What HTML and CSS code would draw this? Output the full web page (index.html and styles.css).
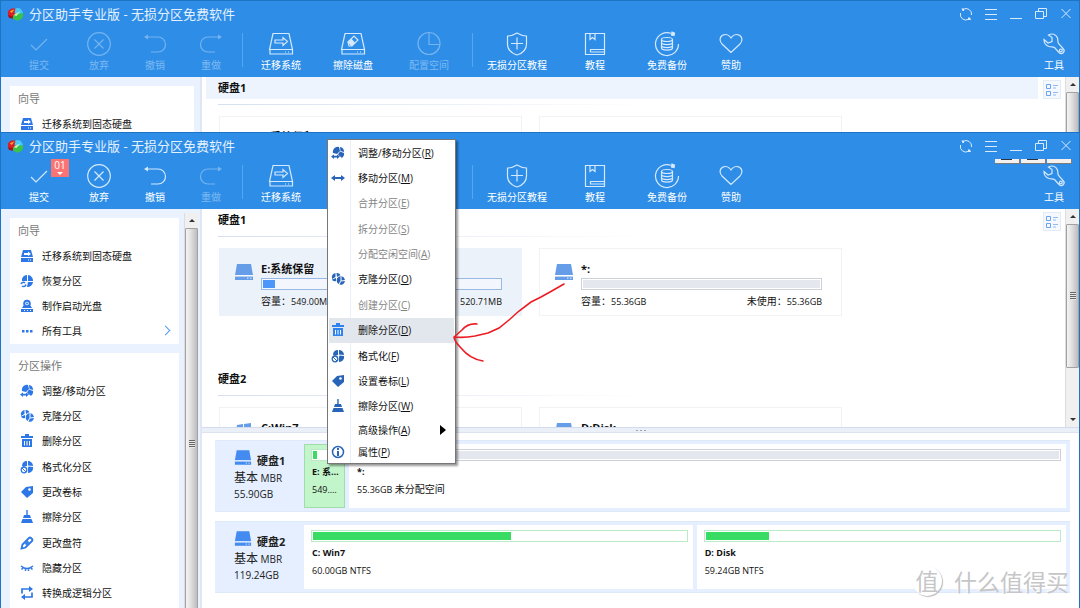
FILE: index.html
```html
<!DOCTYPE html>
<html lang="zh-CN">
<head>
<meta charset="utf-8">
<meta name="viewport" content="width=device-width, initial-scale=1">
<title>分区助手专业版 - 无损分区免费软件</title>
<link rel="stylesheet" href="styles.css">
</head>
<body>
<svg class="sprite" aria-hidden="true">
  <symbol id="logo" viewBox="0 0 18 16">
    <path d="M1 5q4-5 9-2l-1 5-2 3-4 1-2-3z" fill="#d81f26"/><path d="M3 5l5-2-3 4z" fill="#f4a430"/><path d="M1 9l6 2-1 2-4-1z" fill="#a80f18"/>
    <path d="M9 2q6-2 8 5l-6 2-3-2z" fill="#45c8f5"/><path d="M7 9l10-2q1 6-5 8-4 0-6-3z" fill="#39c34a"/><path d="M7 9l7-4-4 5z" fill="#d4f5a4"/>
  </symbol>
  <symbol id="check" viewBox="0 0 26 26"><path d="M5 14l5 5L21 8"/></symbol>
  <symbol id="cancel" viewBox="0 0 26 26"><circle cx="13" cy="13" r="11.3"/><path d="M8.500 8.500l9 9m0-9l-9 9"/></symbol>
  <symbol id="undo" viewBox="0 0 26 26"><path d="M5 6h11a7.500 7.500 0 0 1 0 15H9"/><path d="M2 6l4-2.500v5z" fill="currentColor" stroke="none"/></symbol>
  <symbol id="redo" viewBox="0 0 26 26"><path d="M21 6H10a7.500 7.500 0 0 0 0 15h7"/><path d="M24 6l-4-2.500v5z" fill="currentColor" stroke="none"/></symbol>
  <symbol id="migrate" viewBox="0 0 26 26"><path d="M5 2.500h16l3.500 16h-23zM2 18.500v4.500h22.500v-4.500"/><path d="M7 9h8V6.500l4.500 4L15 14.500V12H7z"/><path d="M17 21h1m2 0h1"/></symbol>
  <symbol id="wipe" viewBox="0 0 26 26"><path d="M5 2.500h16l3.500 16h-23zM2 18.500v4.500h22.500v-4.500"/><path d="M8 11l6-6 4 4-6 6H9z"/><path d="M8.500 11l3-2.500 3 3.500-3 2.500z" fill="currentColor"/><path d="M17 21h1m2 0h1"/></symbol>
  <symbol id="pie" viewBox="0 0 26 26"><circle cx="13" cy="12.500" r="11"/><path d="M13 1.500v12h10.500"/></symbol>
  <symbol id="shield" viewBox="0 0 26 26"><path d="M13 2q5 3 9.500 3v8q0 8-9.500 11Q3.500 21 3.500 13V5q4.500 0 9.500-3zM13 6.500v12M7 12.500h12"/></symbol>
  <symbol id="book" viewBox="0 0 26 26"><path d="M3.500 2.500h19v21h-19zM8 2.500v6l2.500-2 2.500 2v-6M22 18.500H8.500V21H22"/></symbol>
  <symbol id="backup" viewBox="0 0 26 26"><path d="M17 2.300A11.500 11.500 0 1 0 24.500 13"/><path d="M18 1l2.500 1-.5 2.500-2.500-.5z" fill="currentColor"/><ellipse cx="13" cy="8.500" rx="5.500" ry="2"/><path d="M7.500 8.500v8.500c0 2.700 11 2.700 11 0V8.500M7.500 11.500c0 2.700 11 2.700 11 0M7.500 14.500c0 2.700 11 2.700 11 0"/></symbol>
  <symbol id="heart" viewBox="0 0 26 26"><path d="M13 21.500L4 13C0 8 3 3.500 7.500 3.500c3 0 5.500 3 5.500 4 0-1 2.500-4 5.500-4C23 3.500 26 8 22 13z"/></symbol>
  <symbol id="wrench" viewBox="0 0 26 26"><path d="M3 8.500l4 3.500 4-1.500V6.500L7.500 4C11 2 15 3 16.500 7c.6 2 0 4 1 5.500l4.500 5c3 3-1 7-4 4l-4.500-5c-1.500-1-3.500-.3-5.500-1C4.500 14.500 3 12 3 8.500z"/><circle cx="19.800" cy="19.500" r="1.400"/></symbol>
  <symbol id="refresh" viewBox="0 0 14 14"><path d="M4 2.500A5.500 5.500 0 0 1 12.500 8M9.500 12.300A5.500 5.500 0 0 1 1.500 6"/><path d="M2.500 1.500h2.500v2.500H3.500zM9 10.500h2l1 2.500H9z" fill="currentColor" stroke="none"/></symbol>
  <symbol id="lines" viewBox="0 0 14 14"><path d="M1 2.500h12M1 7.500h12M1 12.500h12"/></symbol>
  <symbol id="min" viewBox="0 0 14 14"><path d="M1 11.500h12"/></symbol>
  <symbol id="restore" viewBox="0 0 14 14"><path d="M1.500 4.500h8v7h-8zM4.500 4V1.500h8v8H10"/></symbol>
  <symbol id="close" viewBox="0 0 14 14"><path d="M2.500 2l9 9m0-9l-9 9"/></symbol>
  <symbol id="s-migrate" viewBox="0 0 14 14"><path fill="currentColor" d="M3 1h8l2 7H1zM1 9h12v4H1z"/><path fill="#fff" d="M4 4h4V2.500L11 5 8 7V6H4zM8 10.500h1v1H8zm2 0h1v1h-1z"/></symbol>
  <symbol id="s-recover" viewBox="0 0 14 14"><path fill="currentColor" d="M7 1v6H2a5 5 0 0 1 5-6zM8 1a5.500 5.500 0 0 1 5 6H8zM8 8h5a5.500 5.500 0 0 1-6 5z"/><path d="M1 10a2.500 2.500 0 0 1 4-1M6 10.500a2.500 2.500 0 0 1-4 1.500" fill="none" stroke="currentColor" stroke-width="1.500"/></symbol>
  <symbol id="s-disc" viewBox="0 0 14 14"><path fill="currentColor" d="M1 10h12v3H1zM2 9l1.500-2.500h7L12 9z"/><circle cx="7" cy="4.500" r="2.800" fill="#fff" stroke="currentColor" stroke-width="2"/><circle cx="7" cy="4.500" r="1" fill="currentColor"/><path fill="#fff" d="M4 11h1v1H4zm3 0h1v1H7zm3 0h1v1h-1z"/></symbol>
  <symbol id="s-more" viewBox="0 0 14 14"><path fill="currentColor" d="M2 6h2.500v2.500H2zm4 0h2.500v2.500H6zm4 0h2.500v2.500H10z"/></symbol>
  <symbol id="s-resize" viewBox="0 0 14 14"><path fill="currentColor" d="M2 7a5 5 0 0 1 6-6l1 4-3 3zM9 1A5 5 0 0 1 13 6l-3.500-1zM13 7a5 5 0 0 1-2 5L7 8.500l2-3z"/><path fill="currentColor" d="M0 10.500l3-2v1.300h3V8.500l3 2-3 2.500v-1.500H3V13z"/></symbol>
  <symbol id="s-clone" viewBox="0 0 14 14"><path fill="currentColor" d="M4.500 1v4L1 7Q0 2 4.500 1zM5.500 1Q8 .5 9.500 3L6 5zM1 7.500L5 6v3Q2 10 1 7.500zM6 6.500Q7 4.500 9.500 4v5l-2 3Q5 10 6 6.500zM10.500 4Q13.500 5 14 8l-3.500.5zM10 9.500l4-.5q-1 4.500-5.500 3.500z"/></symbol>
  <symbol id="s-trash" viewBox="0 0 14 14"><path fill="currentColor" d="M5 0h4v2h4v2H1V2h4zM2 5h10v8H2z"/><path stroke="#fff" d="M4.500 7v4.500m2.500-4.500v4.500M9.500 7v4.500"/></symbol>
  <symbol id="s-format" viewBox="0 0 14 14"><path fill="currentColor" d="M2 5.500A5 5 0 0 1 7 1v5L3 7zM8 1a5 5 0 0 1 5 5L8 5.500zM13 7a5 5 0 0 1-5 6V8l.5-1.500z"/><circle cx="4" cy="10" r="2.800" fill="#fff" stroke="currentColor" stroke-width="1.300"/><path d="M2 8l4 4" stroke="currentColor"/></symbol>
  <symbol id="s-tag" viewBox="0 0 14 14"><path fill="currentColor" d="M6 2l7-1 0 7-6 5-6-6z"/><circle cx="9.500" cy="4.500" r="1.300" fill="#fff"/></symbol>
  <symbol id="s-broom" viewBox="0 0 14 14"><path fill="currentColor" d="M6.300 0h1.400v5h2.300l1 3H3l1-3h2.300zM2.500 9h9l1.500 4H1z"/></symbol>
  <symbol id="s-pencil" viewBox="0 0 14 14"><path fill="none" stroke="currentColor" stroke-width="1.800" d="M1.500 12.500l1-4 6.500-6.500q1-1 2 0l1 1q1 1 0 2L5.500 11.500zM5.500 8.500l3-3"/></symbol>
  <symbol id="s-eye" viewBox="0 0 14 14"><path fill="none" stroke="currentColor" stroke-width="1.500" d="M1 5q6 5 12 0M3 7L1.500 8.500M5.500 8v2M8.500 8v2M11 7l1.500 1.500"/></symbol>
  <symbol id="s-convert" viewBox="0 0 14 14"><path fill="none" stroke="currentColor" stroke-width="1.700" d="M2 7.500V3h8M12 6.500v4.500H4"/><path fill="currentColor" d="M9 0l4 3-4 3zM5 8l-4 3 4 3z"/></symbol>
  <symbol id="s-move" viewBox="0 0 14 14"><path fill="currentColor" d="M0 7l4-3v2h6V4l4 3-4 3V8H4v2z"/></symbol>
  <symbol id="s-info" viewBox="0 0 14 14"><circle cx="7" cy="7" r="5.500" fill="none" stroke="currentColor" stroke-width="1.500"/><path fill="currentColor" d="M6 3h2v2H6zM6 6h2v5H6z"/></symbol>
  <symbol id="disk" viewBox="0 0 20 16"><path fill="currentColor" d="M3 0h14l2 11H1zM1 12.500h18V16H1z"/><path fill="#fff" opacity=".6" d="M13 13.500h1.500V15H13zm3 0h1.500V15H16zM1 11.200h18v1H1z"/></symbol>
  <symbol id="windisk" viewBox="0 0 20 16"><path fill="currentColor" d="M3 2l6-1v7H2zM10 1l7-1v8h-7zM1 9h18v7H1z"/></symbol>
  <symbol id="view" viewBox="0 0 14 14"><path fill="none" stroke="#6ba3f3" d="M1.500 1.500h4v4h-4zM1.500 8.500h4v4h-4z"/><path stroke="#8fbaf6" d="M8 2.500h5M8 5h3M8 9.500h5M8 12h3"/></symbol>
</svg>

<section class="window window-back">
  <header class="header">
    <div class="titlebar">
      <svg class="logo"><use href="#logo"/></svg><h1>分区助手专业版 - 无损分区免费软件</h1>
      <div class="controls">
        <button aria-label="刷新"><svg><use href="#refresh"/></svg></button><button aria-label="菜单"><svg><use href="#lines"/></svg></button><button aria-label="最小化"><svg><use href="#min"/></svg></button><button aria-label="还原"><svg><use href="#restore"/></svg></button><button aria-label="关闭"><svg><use href="#close"/></svg></button>
      </div>
    </div>
    <nav class="toolbar">
      <button class="tool t64" disabled><svg><use href="#check"/></svg>提交</button>
      <button class="tool t56" disabled><svg><use href="#cancel"/></svg>放弃</button>
      <button class="tool t56" disabled><svg><use href="#undo"/></svg>撤销</button>
      <button class="tool t56" disabled><svg><use href="#redo"/></svg>重做</button>
      <span class="sep"></span>
      <button class="tool t72"><svg><use href="#migrate"/></svg>迁移系统</button>
      <button class="tool t72"><svg><use href="#wipe"/></svg>擦除磁盘</button>
      <button class="tool t80" disabled><svg><use href="#pie"/></svg>配置空间</button>
      <span class="sep"></span>
      <button class="tool t84"><svg><use href="#shield"/></svg>无损分区教程</button>
      <button class="tool t72"><svg><use href="#book"/></svg>教程</button>
      <button class="tool t72"><svg><use href="#backup"/></svg>免费备份</button>
      <button class="tool t56"><svg><use href="#heart"/></svg>赞助</button>
      <button class="tool last"><svg><use href="#wrench"/></svg>工具</button>
    </nav>
  </header>
  <div class="content">
    <aside class="sidebar">
      <div class="cards">
        <div class="panel"><h2>向导</h2>
          <button class="nav"><svg><use href="#s-migrate"/></svg>迁移系统到固态硬盘</button>
        </div>
      </div>
    </aside>
    <main class="main">
      <div class="upper">
        <div class="disks">
          <section class="disk"><h3 class="active">硬盘1</h3>
            <div class="volumes">
              <div class="volume"><svg><use href="#disk"/></svg><div><h4>E:系统保留</h4></div></div>
              <div class="volume"><svg><use href="#disk"/></svg><div><h4>*:</h4></div></div>
            </div>
          </section>
        </div>
        <button class="view" aria-label="切换视图"><svg><use href="#view"/></svg></button>
        <div class="scroll"><i class="up"></i><i class="thumb rest"></i></div>
      </div>
    </main>
  </div>
</section>

<section class="window window-front">
  <header class="header">
    <div class="titlebar">
      <svg class="logo"><use href="#logo"/></svg><h1>分区助手专业版 - 无损分区免费软件</h1>
      <div class="controls">
        <button aria-label="刷新"><svg><use href="#refresh"/></svg></button><button aria-label="菜单"><svg><use href="#lines"/></svg></button><button aria-label="最小化"><svg><use href="#min"/></svg></button><button aria-label="还原"><svg><use href="#restore"/></svg></button><button aria-label="关闭"><svg><use href="#close"/></svg></button>
      </div>
    </div>
    <div class="tabs"><i class="dark"></i><i class="dark"></i><i></i></div>
    <nav class="toolbar">
      <button class="tool t64"><svg><use href="#check"/></svg>提交<span class="badge">01</span></button>
      <button class="tool t56"><svg><use href="#cancel"/></svg>放弃</button>
      <button class="tool t56"><svg><use href="#undo"/></svg>撤销</button>
      <button class="tool t56" disabled><svg><use href="#redo"/></svg>重做</button>
      <span class="sep"></span>
      <button class="tool t72"><svg><use href="#migrate"/></svg>迁移系统</button>
      <button class="tool t72"><svg><use href="#wipe"/></svg></button>
      <button class="tool t80" disabled><svg><use href="#pie"/></svg></button>
      <span class="sep"></span>
      <button class="tool t84"><svg><use href="#shield"/></svg>无损分区教程</button>
      <button class="tool t72"><svg><use href="#book"/></svg>教程</button>
      <button class="tool t72"><svg><use href="#backup"/></svg>免费备份</button>
      <button class="tool t56"><svg><use href="#heart"/></svg>赞助</button>
      <button class="tool last"><svg><use href="#wrench"/></svg>工具</button>
    </nav>
  </header>
  <div class="content">
    <aside class="sidebar">
      <div class="cards">
        <div class="panel"><h2>向导</h2>
          <button class="nav"><svg><use href="#s-migrate"/></svg>迁移系统到固态硬盘</button>
          <button class="nav"><svg><use href="#s-recover"/></svg>恢复分区</button>
          <button class="nav"><svg><use href="#s-disc"/></svg>制作启动光盘</button>
          <button class="nav more"><svg><use href="#s-more"/></svg>所有工具</button>
        </div>
        <div class="panel grow"><h2>分区操作</h2>
          <div class="ops">
            <button class="nav"><svg><use href="#s-resize"/></svg>调整/移动分区</button>
            <button class="nav"><svg><use href="#s-clone"/></svg>克隆分区</button>
            <button class="nav"><svg><use href="#s-trash"/></svg>删除分区</button>
            <button class="nav"><svg><use href="#s-format"/></svg>格式化分区</button>
            <button class="nav"><svg><use href="#s-tag"/></svg>更改卷标</button>
            <button class="nav"><svg><use href="#s-broom"/></svg>擦除分区</button>
            <button class="nav"><svg><use href="#s-pencil"/></svg>更改盘符</button>
            <button class="nav"><svg><use href="#s-eye"/></svg>隐藏分区</button>
            <button class="nav"><svg><use href="#s-convert"/></svg>转换成逻辑分区</button>
          </div>
        </div>
      </div>
      <div class="scroll side"><i class="up"></i><i class="thumb rest grip"></i></div>
    </aside>
    <main class="main">
      <div class="upper">
        <div class="disks">
          <section class="disk"><h3>硬盘1</h3>
            <div class="volumes">
              <div class="volume selected"><svg><use href="#disk"/></svg><div><h4>E:系统保留</h4><div class="meter"><i style="width:5%"></i></div><p><span>容量：<b>549.00MB</b></span><span>未使用：<b>520.71MB</b></span></p></div></div>
              <div class="volume"><svg><use href="#disk"/></svg><div><h4>*:</h4><div class="meter free"></div><p><span>容量：<b>55.36GB</b></span><span>未使用：<b>55.36GB</b></span></p></div></div>
            </div>
          </section>
          <section class="disk"><h3>硬盘2</h3>
            <div class="volumes">
              <div class="volume"><svg><use href="#windisk"/></svg><div><h4>C:Win7</h4></div></div>
              <div class="volume"><svg><use href="#disk"/></svg><div><h4>D:Disk</h4></div></div>
            </div>
          </section>
        </div>
        <button class="view" aria-label="切换视图"><svg><use href="#view"/></svg></button>
        <div class="scroll"><i class="up"></i><i class="thumb grip"></i><i class="down"></i></div>
      </div>
      <div class="splitter"><i></i><i></i><i></i></div>
      <div class="maps">
        <div class="map">
          <div class="info"><div><svg><use href="#disk"/></svg><strong>硬盘1</strong></div><p><big>基本</big> MBR</p><p>55.90GB</p></div>
          <div class="part chosen"><div class="bar"><i style="width:14%"></i></div><h4>E: 系统保留</h4><p>549.00MB</p></div>
          <div class="part fill"><div class="bar empty"></div><h4>*:</h4><p>55.36GB <span>未分配空间</span></p></div>
        </div>
        <div class="map">
          <div class="info"><div><svg><use href="#disk"/></svg><strong>硬盘2</strong></div><p><big>基本</big> MBR</p><p>119.24GB</p></div>
          <div class="part c"><div class="bar"><i style="width:53%"></i></div><h4>C: Win7</h4><p>60.00GB NTFS</p></div>
          <div class="part d"><div class="bar"><i style="width:18%"></i></div><h4>D: Disk</h4><p>59.24GB NTFS</p></div>
        </div>
      </div>
    </main>
  </div>
  <div class="menu" role="menu">
    <div class="entries">
      <button role="menuitem"><svg><use href="#s-resize"/></svg><span>调整/移动分区(<u>R</u>)</span></button>
      <button role="menuitem"><svg><use href="#s-move"/></svg><span>移动分区(<u>M</u>)</span></button>
      <button role="menuitem" disabled><span>合并分区(<u>E</u>)</span></button>
      <button role="menuitem" disabled><span>拆分分区(<u>S</u>)</span></button>
      <button role="menuitem" disabled><span>分配空闲空间(<u>A</u>)</span></button>
      <button role="menuitem"><svg><use href="#s-clone"/></svg><span>克隆分区(<u>O</u>)</span></button>
      <button role="menuitem" disabled><span>创建分区(<u>C</u>)</span></button>
      <button role="menuitem" class="hover"><svg><use href="#s-trash"/></svg><span>删除分区(<u>D</u>)</span></button>
      <button role="menuitem"><svg><use href="#s-format"/></svg><span>格式化(<u>F</u>)</span></button>
      <button role="menuitem"><svg><use href="#s-tag"/></svg><span>设置卷标(<u>L</u>)</span></button>
      <button role="menuitem"><svg><use href="#s-broom"/></svg><span>擦除分区(<u>W</u>)</span></button>
    </div>
    <button role="menuitem" class="short sub"><span>高级操作(<u>A</u>)</span></button>
    <button role="menuitem" class="short"><svg><use href="#s-info"/></svg><span>属性(<u>P</u>)</span></button>
  </div>
  <svg class="arrow" viewBox="450 280 120 86" aria-hidden="true"><path d="M564 284L550 292 541 297 531 302 519 311 509 320 499 328 488 333 475 336Q464 338 455 337M477 324Q468 323 462 330L454 337Q454 341 461 348 470 359 483 361"/></svg>
</section>
<div class="watermark"><span>值</span>什么值得买</div>
</body>
</html>
```
FILE: styles.css
```css
* { box-sizing: border-box; margin: 0; padding: 0; }
body {
  height: 100vh;
  display: flex;
  flex-direction: column;
  overflow: hidden;
  position: relative;
  font: 10px/16px "Open Sans", "Noto Sans CJK SC", sans-serif;
  color: #111;
  background: #fff;
}
button { border: 0; background: none; font: inherit; color: inherit; text-align: left; }
svg { display: block; flex: none; }
h1, h2, h3, h4 { font-weight: 400; }
b { font-weight: 400; font-size: 9px; }
.sprite { position: absolute; width: 0; height: 0; }

.window {
  display: flex;
  flex-direction: column;
  overflow: hidden;
  border: 1px solid #1d74c4;
  border-bottom: 0;
  background: #fff;
}
.window-back { flex: 0 0 132px; }
.window-front { flex: 1; min-height: 0; position: relative; }

.header { flex: 0 0 76px; background: #2d8de7; color: #fff; position: relative; }
.titlebar { height: 25px; display: flex; align-items: center; padding-left: 6px; }
.logo { width: 17px; height: 16px; }
.titlebar h1 { margin-left: 5px; font-size: 13px; line-height: 20px; white-space: nowrap; color: #e4f1ff; }
.controls { margin-left: auto; padding-right: 1px; display: flex; }
.controls button { width: 25px; height: 25px; display: grid; place-items: center; color: #d9ebff; }
.controls svg { width: 14px; height: 14px; fill: none; stroke: currentColor; }
.tabs { position: absolute; right: 7px; top: 26px; display: flex; gap: 1px; }
.tabs i { width: 25px; height: 5px; background: #f3f0ee; border-bottom: 1px solid #7b7b7b; border-right: 1px solid #7b7b7b; }
.tabs .dark { background: linear-gradient(#2b3446, #2b3446) 6px 0 / 11px 1px no-repeat #f3f0ee; }

.toolbar { display: flex; padding: 5px 0 0 6px; }
.tool {
  height: 44px;
  display: flex;
  flex-direction: column;
  align-items: center;
  position: relative;
  white-space: nowrap;
}
.tool svg { width: 26px; height: 26px; fill: none; stroke: currentColor; stroke-width: 1.2; color: #d5e9ff; }
.tool:disabled { color: #7db9f2; }
.tool:disabled svg { color: #75b4f1; }
.t56 { width: 56px; }
.t64 { width: 64px; }
.t72 { width: 72px; }
.t80 { width: 80px; }
.t84 { width: 84px; }
.last { width: 50px; margin-left: auto; }
.sep { width: 1px; height: 34px; margin: 2px 2px 0 3px; background: #57a5ed; }
.badge {
  position: absolute;
  left: 44px;
  top: -4px;
  width: 18px;
  height: 18px;
  background: #fa7474;
  font: 10px/13px "Open Sans", sans-serif;
  text-align: center;
}
.badge::after { content: ""; display: block; width: 0; margin: 0 auto; border: 3px solid transparent; border-top-color: #fff; border-bottom: 0; }

.content { flex: 1; min-height: 0; display: flex; }
.sidebar {
  flex: 0 0 201px;
  display: flex;
  gap: 5px;
  padding: 9px 6px 0 9px;
  overflow: hidden;
  background: #eaf2ff;
  border-right: 2px solid #e0e6f2;
}
.window-front .sidebar { padding-right: 2px; }
.cards { flex: 1; display: flex; flex-direction: column; gap: 9px; }
.panel { background: #fff; padding-bottom: 1px; }
.grow { flex: 1 0 auto; }
.panel h2 { height: 25px; padding-left: 8px; font-size: 11px; line-height: 26px; color: #777; }
.nav { width: 100%; height: 25px; display: flex; align-items: center; gap: 8px; padding-left: 10px; }
.nav svg { width: 14px; height: 14px; color: #2d78e6; }
.more::after { content: ""; width: 6px; height: 6px; margin: 0 10px 0 auto; border: solid #4c9cf3; border-width: 1px 1px 0 0; rotate: 45deg; }
.ops { display: grid; grid-auto-rows: 1fr; height: 228px; }
.ops .nav { height: auto; }

.scroll { flex: 0 0 14px; display: flex; flex-direction: column; background: #f0f0f0; border-left: 1px solid #ddd; }
.up, .down { flex: 0 0 15px; display: grid; place-items: center; }
.up::before, .down::before { content: ""; border: 3px solid transparent; border-top-width: 0; border-bottom-color: #333; }
.down { margin-top: auto; }
.down::before { rotate: 180deg; }
.thumb { height: 144px; display: grid; place-items: center; border: 1px solid #a2a2a2; border-radius: 1px; background: linear-gradient(90deg, #f4f4f4, #e2e2e2 40%, #bdbdc1); }
.rest { height: auto; flex: 1; }
.grip::before { content: ""; width: 6px; height: 8px; background: repeating-linear-gradient(#666 0 1px, #e8e8e8 1px 2px); }
.side { margin: -5px 0 -52px; }

.main { flex: 1; min-width: 0; display: flex; flex-direction: column; }
.upper { flex: 0 0 218px; display: flex; overflow: hidden; }
.disks { flex: 1; padding-left: 4px; }
.disk { height: 159px; }
.disk h3 { height: 22px; padding-left: 12px; font-size: 11px; line-height: 22px; font-weight: 700; }
.disk .active { background: #edf4fe; }
.disk h3::after { content: ""; display: block; height: 1px; width: 432px; margin-top: 5px; background: linear-gradient(90deg, #d6e0ee, #fff); }
.volumes { display: flex; gap: 17px; padding: 17px 0 0 13px; }
.volume { flex: 0 1 303px; min-width: 0; height: 68px; display: flex; gap: 7px; padding: 13px 19px 0 14px; border: 1px solid #f1f2f4; }
.volume > svg { width: 20px; height: 16px; margin-top: 2px; color: #659de9; }
.volume > div { flex: 1; }
.volume h4 { font-size: 11px; line-height: 14px; font-weight: 700; }
.selected { background: #ecf2fa; border-color: #ecf2fa; }
.meter { height: 12px; margin-top: 2px; padding: 1px; border: 1px solid #98b8e6; background: #f3f7fd; }
.meter i { display: block; height: 100%; background: #4b95fb; }
.free { border-color: #ccd0d8; background: #e4e7ed content-box; }
.volume p { display: flex; justify-content: space-between; margin-top: 3px; white-space: nowrap; font-family: "Open Sans", "Noto Sans CJK TC", sans-serif; }
.view { flex: 0 0 18px; height: 19px; margin: 3px 4px 0 5px; border: 1px solid #e3ebf7; background: #f5f9fe; display: grid; place-items: center; }
.view svg { width: 14px; height: 14px; }

.splitter { flex: 0 0 6px; display: flex; gap: 2px; align-items: center; justify-content: center; background: #ebf0f8; border-top: 1px solid #d3dcea; border-bottom: 1px solid #dce3ee; }
.splitter i { width: 2px; height: 1px; background: #9ba5b5; }
.maps { flex: 1; min-height: 0; padding: 7px 9px 0 13px; display: flex; flex-direction: column; gap: 9px; }
.map { flex: 0 0 72px; display: flex; gap: 4px; padding: 3px 4px; background: #e5efff; border: solid #dde8f8; border-width: 1px 0; }
.info { flex: 0 0 81px; padding: 5px 0 0 15px; color: #222; }
.info div { display: flex; gap: 5px; height: 21px; }
.info svg { width: 18px; height: 15px; margin-top: 1px; color: #438bf0; }
.info strong { font-size: 11px; line-height: 24px; }
.info big { font-size: 12px; }
.part { min-width: 0; padding: 5px 5px 0 7px; background: #fff; }
.part h4 { padding-left: 1px; margin-top: 3px; font-size: 9px; line-height: 16px; font-weight: 700; overflow: hidden; text-overflow: ellipsis; white-space: nowrap; }
.part p { padding-left: 1px; font-size: 9px; line-height: 19px; overflow: hidden; text-overflow: ellipsis; white-space: nowrap; }
.part p span { font-size: 10px; }
.chosen { flex: 0 0 41px; padding: 4px 1px 0 6px; background: #c3f5ca; border: 1px solid #a2dcaa; }
.chosen p { padding-right: 2px; }
.fill { flex: 1; }
.c { flex: 389; }
.d { flex: 369; }
.bar { height: 12px; padding: 1px; border: 1px solid #bdeac6; background: #fff; }
.bar i { display: block; height: 100%; background: #39dc62; }
.empty { border-color: #ccd0d8; background: #e4e7ed content-box; }

.menu {
  position: absolute;
  left: 326px;
  top: 6px;
  width: 129px;
  padding: 0 1px;
  background: linear-gradient(90deg, #fff 22px, #e8eff8 22px 23px, #fff 23px);
  border: 1px solid #777;
  box-shadow: 2px 2px 2px #0006;
}
.entries { display: grid; grid-auto-rows: 1fr; height: 279px; }
.menu button { width: 100%; display: flex; align-items: center; position: relative; padding-left: 29px; white-space: nowrap; }
.menu svg { position: absolute; left: 2px; width: 14px; height: 14px; color: #2865b9; }
.menu button:disabled { color: #858585; }
.menu .hover { background: #e2e7ee; }
.menu .hover svg { color: #2f83ee; }
.menu .short { height: 22px; }
.menu .sub::after { content: ""; position: absolute; right: 8px; border: 5px solid transparent; border-left: 6px solid #000; border-right: 0; }
.arrow { position: absolute; left: 449px; top: 147px; width: 120px; height: 86px; fill: none; stroke: #ed1c24; stroke-width: 1.6; stroke-linecap: round; }

.watermark {
  position: absolute;
  right: 11px;
  bottom: 12px;
  display: flex;
  align-items: center;
  gap: 12px;
  font: 23px/30px "Noto Sans CJK SC", sans-serif;
  color: #c6c6c8;
  text-shadow: -1px -1px 0 #fff;
}
.watermark span { width: 30px; height: 30px; line-height: 28px; text-align: center; border-radius: 50%; background: #fff; box-shadow: 1px 1px 1px #bbb; }
```
